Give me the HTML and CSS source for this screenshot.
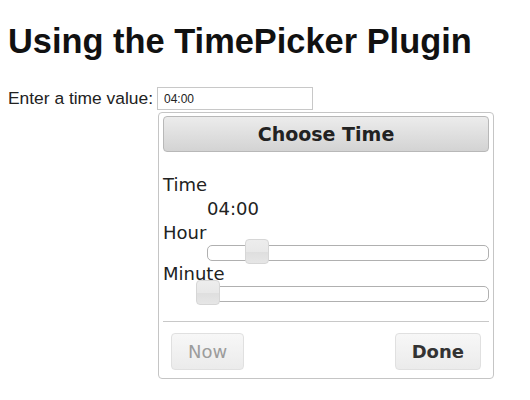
FILE: index.html
```html
<!DOCTYPE html>
<html lang="en">
<head>
  <meta charset="UTF-8">
  <title>Using the TimePicker Plugin</title>
  <meta name="viewport" content="width=device-width, initial-scale=1.0">
  <link rel="stylesheet" href="styles.css">
</head>
<body>
  <h1 class="title">Using the TimePicker Plugin</h1>

  <div class="field">
    <label class="field-label" for="timeInput">Enter a time value:</label>
    <input type="text" id="timeInput" class="time-input" value="04:00">
  </div>

  <div class="picker">
    <div class="picker-header">Choose Time</div>
    <dl class="picker-body">
      <dt>Time</dt>
      <dd class="time-value">04:00</dd>
      <dt>Hour</dt>
      <dd class="slider-row">
        <div class="slider"><span class="handle" style="left: 17.4%"></span></div>
      </dd>
      <dt>Minute</dt>
      <dd class="slider-row">
        <div class="slider"><span class="handle" style="left: 0%"></span></div>
      </dd>
    </dl>
    <div class="picker-buttons">
      <button class="btn" disabled>Now</button>
      <button class="btn primary">Done</button>
    </div>
  </div>
</body>
</html>
```
FILE: styles.css
```css
body {
  margin: 0;
  padding: 0 8px;
  font-family: "Liberation Sans", Arial, sans-serif;
  color: #222;
  background: #fff;
}
.title {
  margin: 22px 0 26px;
  font-size: 34.4px;
  line-height: 39px;
  font-weight: bold;
  color: #111;
}
.field {
  display: flex;
  align-items: center;
  gap: 4px;
  height: 23px;
}
.field-label {
  font-size: 17.4px;
  color: #222;
}
.time-input {
  width: 156px;
  height: 23px;
  box-sizing: border-box;
  margin: 0;
  padding: 0 6px;
  border: 1px solid #c8c8c8;
  font-family: "Liberation Sans", Arial, sans-serif;
  font-size: 12px;
  color: #222;
}
.picker {
  width: 336px;
  box-sizing: border-box;
  margin: 2px 0 0 150px;
  padding: 3px 4px 8px;
  border: 1px solid #c5c5c5;
  border-radius: 4px;
  font-family: "DejaVu Sans", Verdana, sans-serif;
  font-size: 18px;
  color: #222;
}
.picker-header {
  display: flex;
  align-items: center;
  justify-content: center;
  height: 36px;
  box-sizing: border-box;
  border: 1px solid #b8b8b8;
  border-radius: 4px;
  background: linear-gradient(#ececec, #d3d3d3);
  font-size: 19px;
  font-weight: bold;
  color: #222;
}
.picker-body {
  margin: 21px 0 0;
  line-height: 24px;
}
.picker-body dt {
  margin: 0;
}
.picker-body dd {
  margin: 0 0 0 44px;
}
.picker-body .slider-row {
  margin-bottom: 1px;
}
.slider {
  position: relative;
  height: 16px;
  box-sizing: border-box;
  border: 1px solid #b0b0b0;
  border-radius: 5px;
  background: #fff;
}
.handle {
  position: absolute;
  top: -7px;
  width: 24px;
  height: 25px;
  margin-left: -12px;
  box-sizing: border-box;
  border: 1px solid #d6d6d6;
  border-radius: 4px;
  background: linear-gradient(#ededed 0, #e8e8e8 50%, #dedede 50%, #e6e6e6 100%);
}
.picker-buttons {
  display: flex;
  justify-content: space-between;
  margin-top: 19px;
  padding: 11px 8px 0;
  border-top: 1px solid #c8c8c8;
}
.btn {
  height: 37px;
  padding: 0 16px;
  border: 1px solid #e0e0e0;
  border-radius: 4px;
  background: linear-gradient(#f7f7f7, #ebebeb);
  font-family: "DejaVu Sans", Verdana, sans-serif;
  font-size: 18px;
  color: #333;
}
.btn:disabled {
  color: #9c9c9c;
}
.btn.primary {
  font-weight: bold;
  color: #333;
}
```
